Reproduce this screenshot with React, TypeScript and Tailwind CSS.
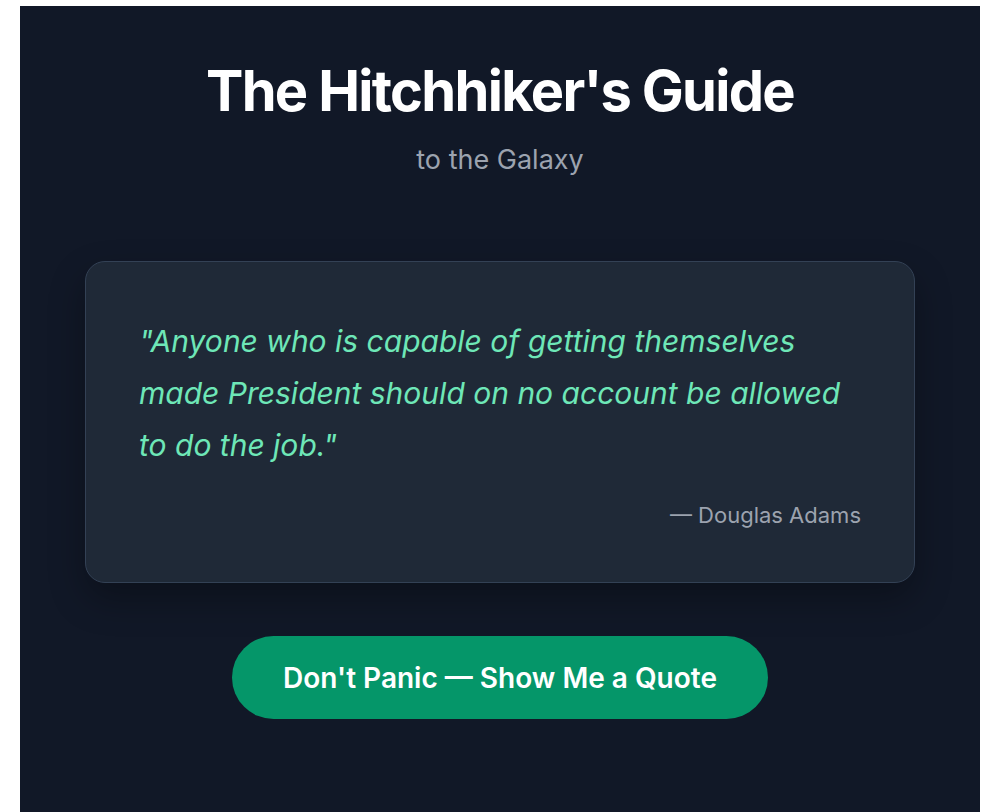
export default function App() {
  const sans = { fontFamily: 'Inter, "Noto Sans", sans-serif' };
  return (
    <div className="min-h-[812px] bg-white pl-[20px] pr-[4px] pt-[6px]" style={sans}>
      <div className="flex min-h-[806px] flex-col items-center bg-[#111827] pt-[57px]">
        <h1 className="text-[56px] font-bold leading-[56px] tracking-[-0.03em] text-white">
          The Hitchhiker's Guide
        </h1>
        <p className="mt-[23px] text-[27px] leading-[36px] text-[#9ca3af]">to the Galaxy</p>

        <div className="mt-[83px] w-[830px] rounded-[20px] border border-[#334155] bg-[#1f2937] px-[53px] pb-[51px] pt-[53px] shadow-[0_16px_36px_rgba(0,0,0,0.3)]">
          <p className="max-w-[715px] text-[30px] italic leading-[52px] text-[#6ee7b7]">
            "Anyone who is capable of getting themselves made President should on no account be allowed to do the job."
          </p>
          <p className="mt-[28px] text-right text-[22px] leading-[32px] text-[#9ca3af]">— Douglas Adams</p>
        </div>

        <button className="mt-[53px] h-[83px] w-[536px] rounded-full bg-[#059669] text-[28px] font-semibold text-white">
          Don't Panic — Show Me a Quote
        </button>
      </div>
    </div>
  );
}
